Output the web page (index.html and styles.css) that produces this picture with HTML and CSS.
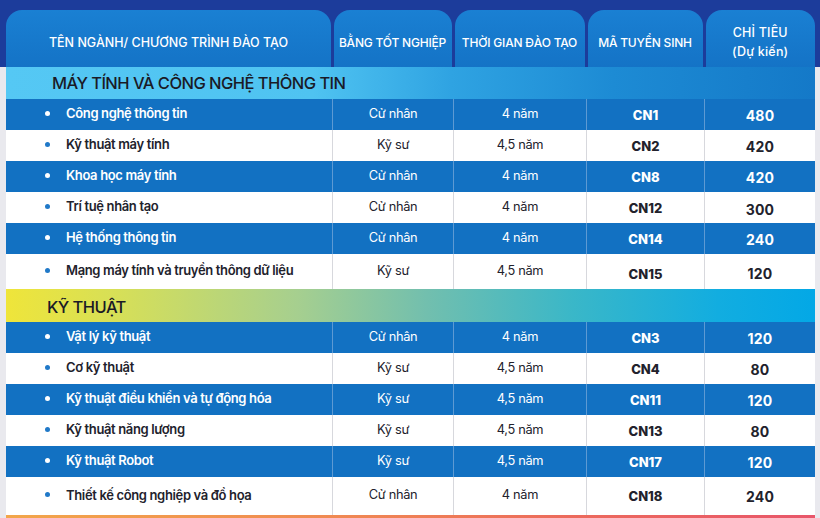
FILE: index.html
```html
<!DOCTYPE html>
<html lang="vi">
<head>
<meta charset="utf-8">
<title>Ngành đào tạo</title>
<link rel="stylesheet" href="styles.css">
</head>
<body>
<div class="page">
  <div class="head">
    <div class="grid">
      <div class="tab tab-wide">TÊN NGÀNH/ CHƯƠNG TRÌNH ĐÀO TẠO</div>
      <div class="tab">BẰNG TỐT NGHIỆP</div>
      <div class="tab">THỜI GIAN ĐÀO TẠO</div>
      <div class="tab">MÃ TUYỂN SINH</div>
      <div class="tab tab-two"><span>CHỈ TIÊU</span><span>(Dự kiến)</span></div>
    </div>
  </div>
  <div class="body">
    <div class="table">
      <div class="section sec-it">MÁY TÍNH VÀ CÔNG NGHỆ THÔNG TIN</div>
      <div class="row blue"><div class="name">Công nghệ thông tin</div><div class="c">Cử nhân</div><div class="c">4 năm</div><div class="c code">CN1</div><div class="c num">480</div></div>
      <div class="row"><div class="name">Kỹ thuật máy tính</div><div class="c">Kỹ sư</div><div class="c">4,5 năm</div><div class="c code">CN2</div><div class="c num">420</div></div>
      <div class="row blue"><div class="name">Khoa học máy tính</div><div class="c">Cử nhân</div><div class="c">4 năm</div><div class="c code">CN8</div><div class="c num">420</div></div>
      <div class="row"><div class="name">Trí tuệ nhân tạo</div><div class="c">Cử nhân</div><div class="c">4 năm</div><div class="c code">CN12</div><div class="c num low">300</div></div>
      <div class="row blue"><div class="name">Hệ thống thông tin</div><div class="c">Cử nhân</div><div class="c">4 năm</div><div class="c code">CN14</div><div class="c num">240</div></div>
      <div class="row tall"><div class="name">Mạng máy tính và truyền thông dữ liệu</div><div class="c">Kỹ sư</div><div class="c">4,5 năm</div><div class="c code low">CN15</div><div class="c num low">120</div></div>
      <div class="section sec-kt">KỸ THUẬT</div>
      <div class="row blue"><div class="name">Vật lý kỹ thuật</div><div class="c">Cử nhân</div><div class="c">4 năm</div><div class="c code">CN3</div><div class="c num">120</div></div>
      <div class="row"><div class="name">Cơ kỹ thuật</div><div class="c">Kỹ sư</div><div class="c">4,5 năm</div><div class="c code">CN4</div><div class="c num">80</div></div>
      <div class="row blue"><div class="name">Kỹ thuật điều khiển và tự động hóa</div><div class="c">Kỹ sư</div><div class="c">4,5 năm</div><div class="c code">CN11</div><div class="c num">120</div></div>
      <div class="row"><div class="name">Kỹ thuật năng lượng</div><div class="c">Kỹ sư</div><div class="c">4,5 năm</div><div class="c code">CN13</div><div class="c num">80</div></div>
      <div class="row blue"><div class="name">Kỹ thuật Robot</div><div class="c">Kỹ sư</div><div class="c">4,5 năm</div><div class="c code">CN17</div><div class="c num">120</div></div>
      <div class="row taller"><div class="name">Thiết kế công nghiệp và đồ họa</div><div class="c">Cử nhân</div><div class="c">4 năm</div><div class="c code">CN18</div><div class="c num">240</div></div>
      <div class="foot"></div>
    </div>
  </div>
</div>
</body>
</html>
```

FILE: styles.css
```css
* { box-sizing: border-box; }
html, body { margin: 0; padding: 0; }
body {
  width: 820px;
  height: 518px;
  overflow: hidden;
  background: #e9e9ee;
  font-family: "Inter", "Liberation Sans", sans-serif;
  color: #1f1f28;
}
.page { width: 820px; }
.grid, .row {
  display: grid;
  grid-template-columns: 326px 121px 133px 118px 111px;
}
.head {
  background: #1c3c9b;
  padding: 10px 0 0 6px;
  height: 67px;
}
.head .grid { height: 57px; }
.tab {
  margin: 0 1.5px;
  border-radius: 16px 16px 0 0;
  background: linear-gradient(180deg, #1a80d3 0%, #1473c6 100%);
  color: #fff;
  font-size: 12px;
  font-weight: 500;
  letter-spacing: -0.2px;
  display: flex;
  align-items: center;
  justify-content: center;
  text-align: center;
  padding-top: 7px;
  white-space: nowrap;
}
.tab:first-child { margin-left: 0; margin-right: 1px; }
.tab:last-child { margin-right: 0; }
.tab-wide { font-size: 12.5px; letter-spacing: 0; }
.tab-two {
  flex-direction: column;
  gap: 3px;
  font-size: 12.5px;
  line-height: 16px;
  letter-spacing: 0.2px;
}
.body { padding-left: 6px; }
.table { width: 809px; }
.section {
  height: 32px;
  display: flex;
  align-items: center;
  font-size: 16.5px;
  font-weight: 500;
  color: #1a1a26;
  letter-spacing: -0.55px;
}
.sec-it {
  padding-left: 46px;
  background: linear-gradient(90deg, #55c8f4 0%, #4fc3f1 38%, #2fa3e2 55%, #1d8bd4 75%, #1479c8 100%);
}
.sec-kt {
  height: 33px;
  padding-left: 41px;
  padding-top: 2px;
  background: linear-gradient(90deg, #efe53a 0%, #d6df58 14%, #a6cf8f 36%, #72bfae 52%, #3ab7c8 70%, #12ade0 88%, #03a8e6 100%);
}
.row {
  height: 31px;
  background: #fff;
  color: #22222c;
}
.row.tall { height: 35px; }
.row.taller { height: 38px; }
.row.blue { background: #1271c2; color: #fff; }
.row > div {
  display: flex;
  align-items: center;
  padding-bottom: 3px;
}
.name {
  padding-left: 39px;
  font-size: 13px;
  font-weight: 600;
  letter-spacing: -0.35px;
  white-space: nowrap;
}
.name::before {
  content: "";
  width: 5px;
  height: 5px;
  border-radius: 50%;
  background: #2079c8;
  margin-right: 16px;
  flex: none;
}
.row.blue .name::before { background: #fff; }
.c {
  justify-content: center;
  font-size: 12.8px;
  font-weight: 400;
  letter-spacing: -0.3px;
  border-left: 1px solid #d7d8dd;
}
.row.blue .c { border-left-color: #5d9ad3; }
.code {
  font-weight: 800;
  font-size: 13px;
  letter-spacing: 0;
  padding-bottom: 0 !important;
}
.num {
  font-weight: 700;
  font-size: 14px;
  letter-spacing: 0.2px;
  padding-bottom: 0 !important;
  padding-top: 1px;
}
.low { padding-top: 4px; }
.foot {
  height: 4px;
  background: linear-gradient(90deg, #f2a64a 0%, #f08a52 40%, #ec6a5c 70%, #e8566a 100%);
}
```
